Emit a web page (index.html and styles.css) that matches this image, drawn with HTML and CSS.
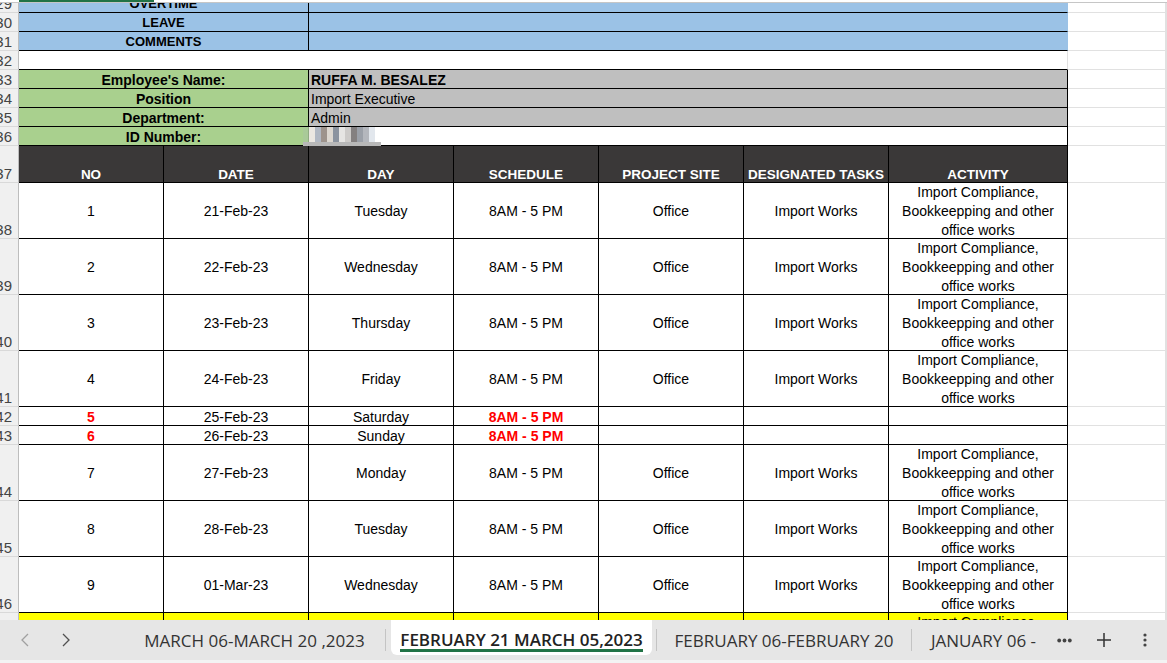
FILE: index.html
```html
<!DOCTYPE html>
<html>
<head>
<meta charset="utf-8">
<link rel="stylesheet" href="styles.css">
</head>
<body>
<div class="app">
  <div class="colhead"><div class="colsel"></div></div>
  <div class="viewport">
    <div class="sheet">
      <div class="row h19">
        <div class="rh">29</div>
        <div class="c blue lbl s2">OVERTIME</div>
        <div class="c blue s5 openright"></div>
        <div class="g"></div><div class="g"></div>
      </div>
      <div class="row h19">
        <div class="rh">30</div>
        <div class="c blue lbl s2">LEAVE</div>
        <div class="c blue s5 openright"></div>
        <div class="g"></div><div class="g"></div>
      </div>
      <div class="row h19">
        <div class="rh">31</div>
        <div class="c blue lbl s2">COMMENTS</div>
        <div class="c blue s5 openright"></div>
        <div class="g"></div><div class="g"></div>
      </div>
      <div class="row h19">
        <div class="rh">32</div>
        <div class="c s7 gridright"></div>
        <div class="g"></div><div class="g"></div>
      </div>
      <div class="row h19">
        <div class="rh">33</div>
        <div class="c green lbl2 s2">Employee's Name:</div>
        <div class="c grey val s5 bold">RUFFA M. BESALEZ</div>
        <div class="g"></div><div class="g"></div>
      </div>
      <div class="row h19">
        <div class="rh">34</div>
        <div class="c green lbl2 s2">Position</div>
        <div class="c grey val s5">Import Executive</div>
        <div class="g"></div><div class="g"></div>
      </div>
      <div class="row h19">
        <div class="rh">35</div>
        <div class="c green lbl2 s2">Department:</div>
        <div class="c grey val s5">Admin</div>
        <div class="g"></div><div class="g"></div>
      </div>
      <div class="row h19">
        <div class="rh">36</div>
        <div class="c green lbl2 s2">ID Number:</div>
        <div class="c val s5 idcell">
          <div class="blur">
            <div class="blurrow">
              <i style="background:#a9c99a"></i><i style="background:#e7e3dc"></i><i style="background:#a3acb8"></i><i style="background:#8c8078"></i><i style="background:#d6d0c8"></i><i style="background:#77808e"></i><i style="background:#e2e0de"></i><i style="background:#c4c2bf"></i><i style="background:#6f6a6a"></i><i style="background:#8a8f99"></i><i style="background:#a7aab2"></i><i style="background:#dde3ea"></i>
            </div>
            <div class="blurbar"></div>
          </div>
        </div>
        <div class="g"></div><div class="g"></div>
      </div>
      <div class="row h37">
        <div class="rh">37</div>
        <div class="c hd">NO</div>
        <div class="c hd">DATE</div>
        <div class="c hd">DAY</div>
        <div class="c hd">SCHEDULE</div>
        <div class="c hd">PROJECT SITE</div>
        <div class="c hd">DESIGNATED TASKS</div>
        <div class="c hd">ACTIVITY</div>
        <div class="g"></div><div class="g"></div>
      </div>
      <div class="row h56">
        <div class="rh">38</div>
        <div class="c">1</div><div class="c">21-Feb-23</div><div class="c">Tuesday</div><div class="c">8AM - 5 PM</div><div class="c">Office</div><div class="c">Import Works</div>
        <div class="c">Import Compliance,<br>Bookkeepping and other<br>office works</div>
        <div class="g"></div><div class="g"></div>
      </div>
      <div class="row h56">
        <div class="rh">39</div>
        <div class="c">2</div><div class="c">22-Feb-23</div><div class="c">Wednesday</div><div class="c">8AM - 5 PM</div><div class="c">Office</div><div class="c">Import Works</div>
        <div class="c">Import Compliance,<br>Bookkeepping and other<br>office works</div>
        <div class="g"></div><div class="g"></div>
      </div>
      <div class="row h56">
        <div class="rh">40</div>
        <div class="c">3</div><div class="c">23-Feb-23</div><div class="c">Thursday</div><div class="c">8AM - 5 PM</div><div class="c">Office</div><div class="c">Import Works</div>
        <div class="c">Import Compliance,<br>Bookkeepping and other<br>office works</div>
        <div class="g"></div><div class="g"></div>
      </div>
      <div class="row h56">
        <div class="rh">41</div>
        <div class="c">4</div><div class="c">24-Feb-23</div><div class="c">Friday</div><div class="c">8AM - 5 PM</div><div class="c">Office</div><div class="c">Import Works</div>
        <div class="c">Import Compliance,<br>Bookkeepping and other<br>office works</div>
        <div class="g"></div><div class="g"></div>
      </div>
      <div class="row h19">
        <div class="rh">42</div>
        <div class="c red">5</div><div class="c">25-Feb-23</div><div class="c">Saturday</div><div class="c red">8AM - 5 PM</div><div class="c"></div><div class="c"></div><div class="c"></div>
        <div class="g"></div><div class="g"></div>
      </div>
      <div class="row h19">
        <div class="rh">43</div>
        <div class="c red">6</div><div class="c">26-Feb-23</div><div class="c">Sunday</div><div class="c red">8AM - 5 PM</div><div class="c"></div><div class="c"></div><div class="c"></div>
        <div class="g"></div><div class="g"></div>
      </div>
      <div class="row h56">
        <div class="rh">44</div>
        <div class="c">7</div><div class="c">27-Feb-23</div><div class="c">Monday</div><div class="c">8AM - 5 PM</div><div class="c">Office</div><div class="c">Import Works</div>
        <div class="c">Import Compliance,<br>Bookkeepping and other<br>office works</div>
        <div class="g"></div><div class="g"></div>
      </div>
      <div class="row h56">
        <div class="rh">45</div>
        <div class="c">8</div><div class="c">28-Feb-23</div><div class="c">Tuesday</div><div class="c">8AM - 5 PM</div><div class="c">Office</div><div class="c">Import Works</div>
        <div class="c">Import Compliance,<br>Bookkeepping and other<br>office works</div>
        <div class="g"></div><div class="g"></div>
      </div>
      <div class="row h56">
        <div class="rh">46</div>
        <div class="c">9</div><div class="c">01-Mar-23</div><div class="c">Wednesday</div><div class="c">8AM - 5 PM</div><div class="c">Office</div><div class="c">Import Works</div>
        <div class="c">Import Compliance,<br>Bookkeepping and other<br>office works</div>
        <div class="g"></div><div class="g"></div>
      </div>
      <div class="row h56">
        <div class="rh">47</div>
        <div class="c yellow"></div><div class="c yellow"></div><div class="c yellow"></div><div class="c yellow"></div><div class="c yellow"></div><div class="c yellow"></div>
        <div class="c yellow">Import Compliance,<br>Bookkeepping and other<br>office works</div>
        <div class="g"></div><div class="g"></div>
      </div>
    </div>
  </div>
  <div class="tabbar">
    <div class="nav">
      <span class="navbtn prev"><svg width="8" height="14" viewBox="0 0 8 14"><polyline points="7,1 1,7 7,13" fill="none" stroke="#a0a0a0" stroke-width="1.3"/></svg></span>
      <span class="navbtn next"><svg width="8" height="14" viewBox="0 0 8 14"><polyline points="1,1 7,7 1,13" fill="none" stroke="#505050" stroke-width="1.3"/></svg></span>
    </div>
    <div class="tab tab1">MARCH 06-MARCH 20 ,2023</div>
    <div class="sep"></div>
    <div class="tab active"><span class="ul">FEBRUARY 21 MARCH 05,2023</span></div>
    <div class="sep"></div>
    <div class="tab tab3">FEBRUARY 06-FEBRUARY 20</div>
    <div class="sep"></div>
    <div class="tab tab4">JANUARY 06 -</div>
    <div class="icon more"><svg width="15" height="5" viewBox="0 0 15 5"><circle cx="2.2" cy="2.5" r="1.9" fill="#444"/><circle cx="7.5" cy="2.5" r="1.9" fill="#444"/><circle cx="12.8" cy="2.5" r="1.9" fill="#444"/></svg></div>
    <div class="icon plus"><svg width="16" height="16" viewBox="0 0 16 16"><path d="M8 1v14M1 8h14" stroke="#333" stroke-width="1.5" fill="none"/></svg></div>
    <div class="icon kebab"><svg width="4" height="14" viewBox="0 0 4 14"><circle cx="2" cy="2" r="1.6" fill="#444"/><circle cx="2" cy="7" r="1.6" fill="#444"/><circle cx="2" cy="12" r="1.6" fill="#444"/></svg></div>
  </div>
  <div class="bottomstrip"></div>
</div>
</body>
</html>
```

FILE: styles.css
```css
* { box-sizing: border-box; margin: 0; padding: 0; }
html, body { width: 1167px; height: 663px; overflow: hidden; background: #fff; }
body { font-family: "Liberation Sans", Arial, sans-serif; color: #000; }

.app { display: flex; flex-direction: column; height: 663px; }

.colhead { flex: none; height: 3px; border-bottom: 1px solid #c6c6c6; background: #fff; }
.colsel { margin-left: 19px; width: 135px; height: 2px; background: #217346; }

.viewport { flex: none; height: 617px; overflow: hidden; background: #fff; }
.sheet { margin-top: -9px; }

.row {
  display: grid;
  grid-template-columns: 19px 145px 145px 145px 145px 145px 145px 179px 98px 1fr;
  grid-template-rows: minmax(0, 1fr);
}
.h19 { height: 19px; }
.h37 { height: 37px; }
.h56 { height: 56px; }

.rh {
  background: #f0f0f0;
  border-right: 1px solid #bdbdbd;
  border-bottom: 1px solid #d9d9d9;
  display: flex;
  justify-content: flex-end;
  align-items: flex-end;
  overflow: hidden;
  padding-right: 6px;
  font-size: 15px;
  line-height: 17px;
  color: #444;
  white-space: nowrap;
  min-height: 0;
}

.c {
  min-height: 0;
  border-right: 1px solid #000;
  border-bottom: 1px solid #000;
  display: flex;
  align-items: center;
  justify-content: center;
  text-align: center;
  font-size: 14px;
  line-height: 19px;
  white-space: nowrap;
}
.h19 .c { line-height: 18px; padding-top: 2px; }
.h56 .c { padding-top: 1px; }

.g { min-height: 0; border-right: 1px solid #e1e1e1; border-bottom: 1px solid #e1e1e1; }

.s2 { grid-column: span 2; }
.s5 { grid-column: span 5; }
.s7 { grid-column: span 7; }

.blue { background: #9bc2e6; }
.openright { border-right-color: #9bc2e6; }
.gridright { border-right-color: #e1e1e1; }
.green { background: #a9d08e; }
.grey { background: #bfbfbf; }
.yellow { background: #ffff00; }

.lbl { font-weight: bold; font-size: 13px; }
.lbl2 { font-weight: bold; font-size: 14px; }
.bold { font-weight: bold; }
.val { justify-content: flex-start; padding-left: 2px; }

.hd {
  background: #3a3838;
  color: #fff;
  font-weight: bold;
  font-size: 13.5px;
  line-height: 15px;
  align-items: flex-end;
  padding-bottom: 0;
}

.red { color: #ff0000; font-weight: bold; }

.idcell { position: relative; overflow: visible; }
.h19 .idcell { padding-top: 0; }
.blur { position: absolute; left: -6px; top: 0; width: 80px; }
.blurrow { display: flex; height: 15px; }
.blurrow i { display: block; width: 6px; height: 15px; opacity: 0.85; }
.blurbar { height: 4px; width: 78px; background: #b8b8b8; }

.tabbar {
  flex: none;
  height: 40px;
  background: #e6e6e6;
  display: flex;
  align-items: center;
  font-family: "Open Sans", "Noto Sans", sans-serif;
  font-size: 17px;
  color: #333;
}
.nav { width: 124px; height: 40px; display: flex; align-items: center; }
.navbtn { display: flex; align-items: center; justify-content: center; }
.prev { margin-left: 21px; }
.next { margin-left: 33px; }

.tab { display: flex; align-items: center; white-space: nowrap; height: 40px; overflow: hidden; }
.tab1 { width: 261px; justify-content: center; }
.sep { width: 1px; height: 22px; background: #c4c4c4; }
.active {
  margin-left: 5px;
  margin-right: 4px;
  width: 261px;
  height: 35px;
  align-self: flex-start;
  align-items: flex-start;
  justify-content: center;
  padding-top: 9px;
  background: #fff;
  border-radius: 0 0 6px 6px;
  font-weight: 600;
  color: #222;
  line-height: 21px;
}
.ul { position: relative; display: inline-block; }
.ul::after { content: ""; position: absolute; left: 0; right: 0; bottom: -2px; height: 3px; background: #217346; }
.tab3 { width: 254px; justify-content: center; }
.tab4 { width: 137px; padding-left: 19px; }

.icon { display: flex; align-items: center; justify-content: center; height: 40px; }
.more { width: 30px; }
.plus { width: 50px; }
.kebab { width: 32px; }

.bottomstrip { flex: none; height: 3px; background: #f3f3f3; }
```
